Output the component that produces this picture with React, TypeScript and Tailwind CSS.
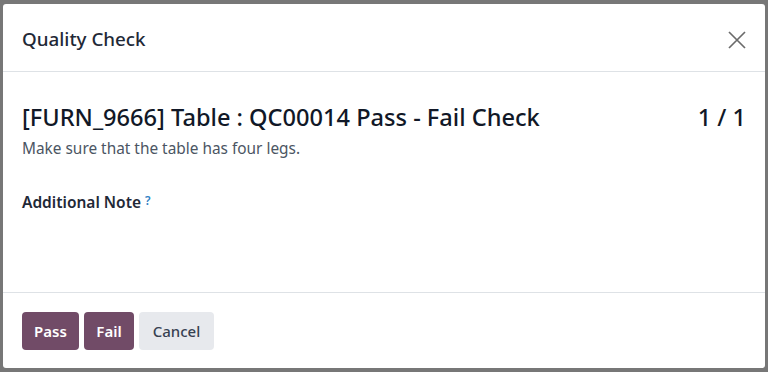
const App = () => {
  return (
    <div className="h-[372px] w-[768px] bg-[#777777] pl-[3px] pr-[3px] pt-[4px] pb-[4px] font-['Noto_Sans',sans-serif]">
      <div className="flex h-[364px] w-[762px] flex-col rounded-[3px] bg-white">
        <div className="flex h-[68px] items-center justify-between border-b border-[#dee2e6] pl-[19px] pr-[18px] pt-[4px]">
          <h4 className="text-[18.8px] font-medium text-[#1f2937]">Quality Check</h4>
          <svg width="18" height="18" viewBox="0 0 18 18" className="mr-[1px]">
            <path d="M1 1L17 17M17 1L1 17" stroke="#6b6b6b" strokeWidth="1.7" />
          </svg>
        </div>

        <div className="flex-1 px-[19px] pt-[29px]">
          <div className="flex items-center justify-between">
            <h2 className="text-[23.6px] font-medium leading-[32px] text-[#111827]">
              [FURN_9666] Table : QC00014 Pass - Fail Check
            </h2>
            <span className="text-[23.6px] font-medium leading-[32px] text-[#111827]">1 / 1</span>
          </div>
          <p className="mt-[5px] text-[15.4px] leading-[22px] text-[#4b5563]">
            Make sure that the table has four legs.
          </p>
          <div className="mt-[31px] text-[15.5px] font-semibold leading-[22px] text-[#1f2937]">
            Additional Note
            <sup className="relative top-[-3px] ml-[4px] text-[12px] font-semibold text-[#2f7fc4]">?</sup>
          </div>
        </div>

        <div className="flex h-[76px] items-start gap-[5px] border-t border-[#dee2e6] pl-[19px] pt-[19px]">
          <button className="h-[38px] w-[57px] rounded-[4px] bg-[#714b67] text-[15px] font-semibold text-white">
            Pass
          </button>
          <button className="h-[38px] w-[50px] rounded-[4px] bg-[#714b67] text-[15px] font-semibold text-white">
            Fail
          </button>
          <button className="h-[38px] w-[75px] rounded-[4px] bg-[#e7e9ed] text-[15px] font-medium text-[#374151]">
            Cancel
          </button>
        </div>
      </div>
    </div>
  );
};

export default App;
